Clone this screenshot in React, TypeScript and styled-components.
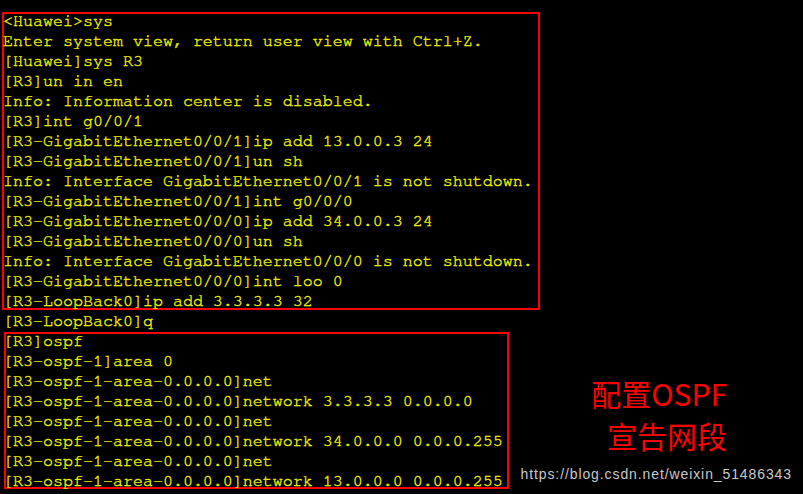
import React from "react";
import styled, { createGlobalStyle } from "styled-components";

const Global = createGlobalStyle`
  html, body { margin: 0; padding: 0; background: #000; }
  #root { width: 803px; height: 494px; }
`;

const Screen = styled.div`
  width: 803px;
  height: 494px;
  box-sizing: border-box;
  padding-top: 12px;
  background: #000;
  overflow: hidden;
  display: flex;
  flex-direction: column;
  font-family: "FreeMono", "Nimbus Mono PS", "Nimbus Mono L", "Liberation Mono", monospace;
  font-size: 16.667px;
  color: #eeee00;
  -webkit-text-stroke: 0.4px #eeee00;
`;

const Frame = styled.div<{ $left: number; $width: number }>`
  box-sizing: border-box;
  border: 2px solid #ff0000;
  margin-left: ${(p) => p.$left}px;
  width: ${(p) => p.$width}px;
`;

const Lines = styled.div<{ $left: number; $bottom: number }>`
  display: flex;
  flex-direction: column;
  margin: -3px 0 ${(p) => p.$bottom}px ${(p) => p.$left}px;
`;

const Row = styled.div`
  height: 20px;
  line-height: 20px;
  white-space: pre;
`;

const LooseRow = styled(Row)`
  margin-top: 1px;
  margin-bottom: 1px;
  padding-left: 3px;
`;

const Bottom = styled.div`
  display: flex;
  flex-direction: row;
`;

const TermColumn = styled.div`
  display: flex;
  flex-direction: column;
`;

const Annotation = styled.div`
  flex: 1;
  display: flex;
  flex-direction: column;
  padding-top: 62px;
  -webkit-text-stroke: 0;
`;

const Title = styled.div`
  font-family: "Noto Sans CJK SC", "Noto Sans", sans-serif;
  font-size: 30px;
  line-height: 42px;
  color: #ff0000;
  text-align: right;
  padding-right: 76px;
`;

const Url = styled.div`
  margin-top: 10px;
  font-family: "Liberation Sans", Arial, sans-serif;
  font-size: 14px;
  line-height: 16px;
  letter-spacing: 0.9px;
  color: #c8c8c8;
  text-align: right;
  padding-right: 11px;
`;

const group1 = [
  "<Huawei>sys",
  "Enter system view, return user view with Ctrl+Z.",
  "[Huawei]sys R3",
  "[R3]un in en",
  "Info: Information center is disabled.",
  "[R3]int g0/0/1",
  "[R3-GigabitEthernet0/0/1]ip add 13.0.0.3 24",
  "[R3-GigabitEthernet0/0/1]un sh",
  "Info: Interface GigabitEthernet0/0/1 is not shutdown.",
  "[R3-GigabitEthernet0/0/1]int g0/0/0",
  "[R3-GigabitEthernet0/0/0]ip add 34.0.0.3 24",
  "[R3-GigabitEthernet0/0/0]un sh",
  "Info: Interface GigabitEthernet0/0/0 is not shutdown.",
  "[R3-GigabitEthernet0/0/0]int loo 0",
  "[R3-LoopBack0]ip add 3.3.3.3 32",
];

const group2 = [
  "[R3]ospf",
  "[R3-ospf-1]area 0",
  "[R3-ospf-1-area-0.0.0.0]net",
  "[R3-ospf-1-area-0.0.0.0]network 3.3.3.3 0.0.0.0",
  "[R3-ospf-1-area-0.0.0.0]net",
  "[R3-ospf-1-area-0.0.0.0]network 34.0.0.0 0.0.0.255",
  "[R3-ospf-1-area-0.0.0.0]net",
  "[R3-ospf-1-area-0.0.0.0]network 13.0.0.0 0.0.0.255",
];

export default function App() {
  return (
    <>
      <Global />
      <Screen>
        <Frame $left={2} $width={538}>
          <Lines $left={-1} $bottom={-3}>
            {group1.map((l, i) => (
              <Row key={i}>{l}</Row>
            ))}
          </Lines>
        </Frame>
        <Bottom>
          <TermColumn>
            <LooseRow>[R3-LoopBack0]q</LooseRow>
            <Frame $left={4} $width={505}>
              <Lines $left={-3} $bottom={-4}>
                {group2.map((l, i) => (
                  <Row key={i}>{l}</Row>
                ))}
              </Lines>
            </Frame>
          </TermColumn>
          <Annotation>
            <Title>
              配置OSPF
              <br />
              宣告网段
            </Title>
            <Url>https://blog.csdn.net/weixin_51486343</Url>
          </Annotation>
        </Bottom>
      </Screen>
    </>
  );
}
